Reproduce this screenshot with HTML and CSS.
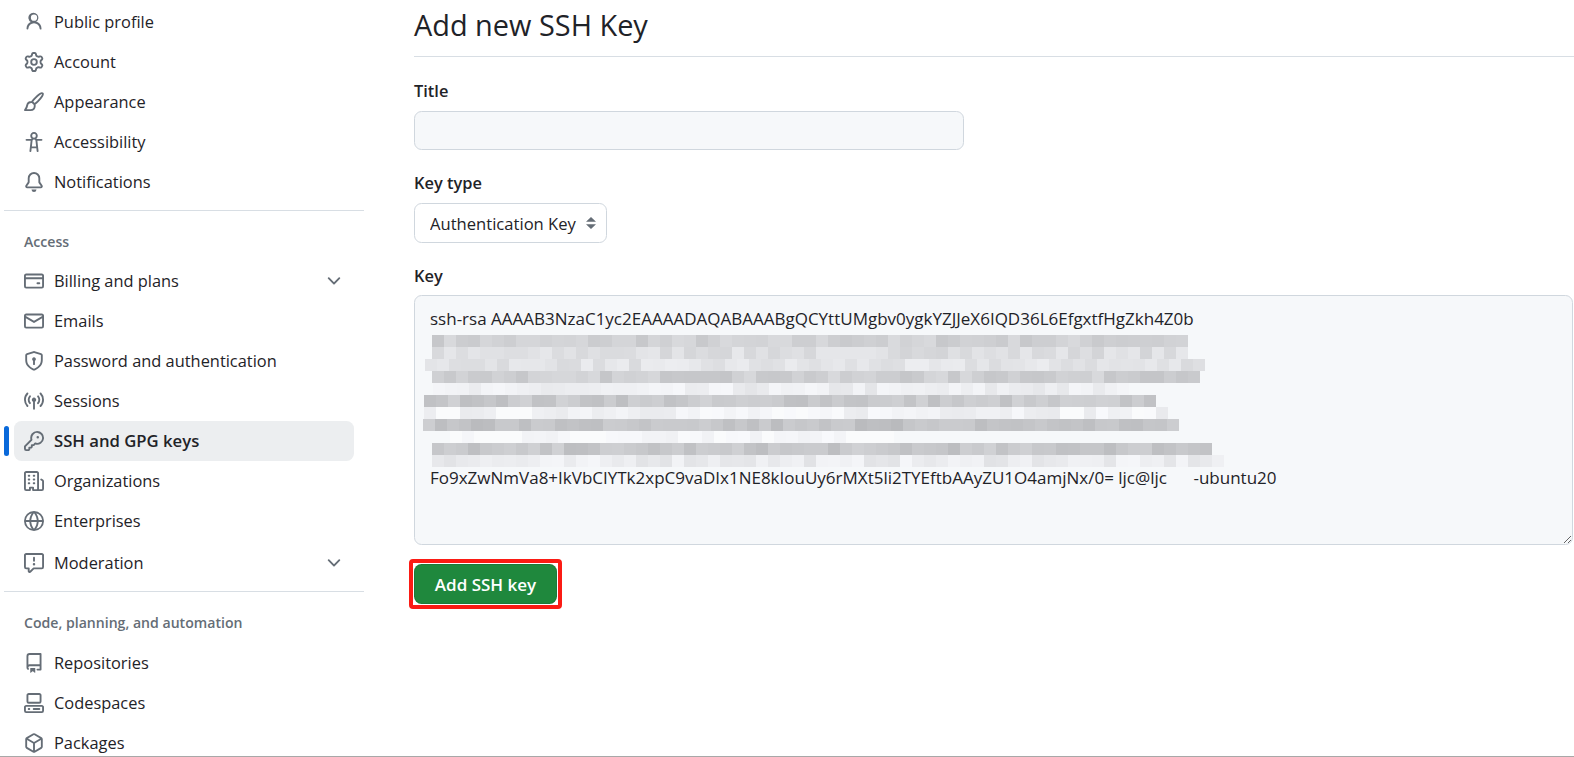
FILE: index.html
```html
<!DOCTYPE html>
<html lang="en">
<head>
    <meta charset="UTF-8">
    <title>Add new SSH Key</title>
    <link rel="stylesheet" href="styles.css">
</head>
<body>
    <div class="page">
        <aside class="side">
            <ul class="menu">
                <li class="item"><svg class="icon" viewBox="0 0 16 16"><path d="M10.561 8.073a6.005 6.005 0 0 1 3.432 5.142.75.75 0 1 1-1.498.07 4.5 4.5 0 0 0-8.99 0 .75.75 0 0 1-1.498-.07 6.004 6.004 0 0 1 3.431-5.142 3.999 3.999 0 1 1 4.123 0ZM10.5 4.5a2.5 2.5 0 1 0-5 0 2.5 2.5 0 0 0 5 0Z"/></svg>Public profile</li>
                <li class="item"><svg class="icon" viewBox="0 0 16 16"><path d="M8 0a8.2 8.2 0 0 1 .701.031C9.444.095 9.99.645 10.16 1.29l.288 1.107c.018.066.079.158.212.224.231.114.454.243.668.386.123.082.233.09.299.071l1.103-.303c.644-.176 1.392.021 1.82.63.27.385.506.792.704 1.218.315.675.111 1.422-.364 1.891l-.814.806c-.049.048-.098.147-.088.294.016.257.016.515 0 .772-.01.147.038.246.088.294l.814.806c.475.469.679 1.216.364 1.891a7.977 7.977 0 0 1-.704 1.217c-.428.61-1.176.807-1.82.63l-1.102-.302c-.067-.019-.177-.011-.3.071a5.909 5.909 0 0 1-.668.386c-.133.066-.194.158-.211.224l-.29 1.106c-.168.646-.715 1.196-1.458 1.26a8.006 8.006 0 0 1-1.402 0c-.743-.064-1.289-.614-1.458-1.26l-.289-1.106c-.018-.066-.079-.158-.212-.224a5.738 5.738 0 0 1-.668-.386c-.123-.082-.233-.09-.299-.071l-1.103.303c-.644.176-1.392-.021-1.82-.63a8.12 8.12 0 0 1-.704-1.218c-.315-.675-.111-1.422.363-1.891l.815-.806c.05-.048.098-.147.088-.294a6.214 6.214 0 0 1 0-.772c.01-.147-.038-.246-.088-.294l-.815-.806C.635 6.045.431 5.298.746 4.623a7.92 7.92 0 0 1 .704-1.217c.428-.61 1.176-.807 1.82-.63l1.102.302c.067.019.177.011.3-.071.214-.143.437-.272.668-.386.133-.066.194-.158.211-.224l.29-1.106C6.009.645 6.556.095 7.299.03 7.53.01 7.764 0 8 0Zm-.571 1.525c-.036.003-.108.036-.137.146l-.289 1.105c-.147.561-.549.967-.998 1.189-.173.086-.34.183-.5.29-.417.278-.97.423-1.529.27l-1.103-.303c-.109-.03-.175.016-.195.045-.22.312-.412.644-.573.99-.014.031-.021.11.059.19l.815.806c.411.406.562.957.53 1.456a4.709 4.709 0 0 0 0 .582c.032.499-.119 1.05-.53 1.456l-.815.806c-.081.08-.073.159-.059.19.162.346.353.677.573.989.02.03.085.076.195.046l1.102-.303c.56-.153 1.113-.008 1.53.27.161.107.328.204.501.29.447.222.85.629.997 1.189l.289 1.105c.029.109.101.143.137.146a6.6 6.6 0 0 0 1.142 0c.036-.003.108-.036.137-.146l.289-1.105c.147-.561.549-.967.998-1.189.173-.086.34-.183.5-.29.417-.278.97-.423 1.529-.27l1.103.303c.109.029.175-.016.195-.045.22-.313.411-.644.573-.99.014-.031.021-.11-.059-.19l-.815-.806c-.411-.406-.562-.957-.53-1.456a4.709 4.709 0 0 0 0-.582c-.032-.499.119-1.05.53-1.456l.815-.806c.081-.08.073-.159.059-.19a6.464 6.464 0 0 0-.573-.989c-.02-.03-.085-.076-.195-.046l-1.102.303c-.56.153-1.113.008-1.53-.27a4.44 4.44 0 0 0-.501-.29c-.447-.222-.85-.629-.997-1.189l-.289-1.105c-.029-.11-.101-.143-.137-.146a6.6 6.6 0 0 0-1.142 0ZM11 8a3 3 0 1 1-6 0 3 3 0 0 1 6 0ZM9.5 8a1.5 1.5 0 1 0-3.001.001A1.5 1.5 0 0 0 9.5 8Z"/></svg>Account</li>
                <li class="item"><svg class="icon line" viewBox="0 0 16 16"><path d="M14.9 1.1c-.8-.8-3.2.9-6.2 4-.9.9-1.7 1.9-2.3 2.7l2 2c.8-.6 1.8-1.4 2.7-2.3 3.1-3 4.6-5.6 3.8-6.4ZM6 8C4 8 2.8 9 2.5 10.8c-.2 1.4-.8 2.6-1.7 3.7h4.4c2 0 3.3-1.2 3.4-3.3 0-.3 0-.7-.1-1"/></svg>Appearance</li>
                <li class="item"><svg class="icon" viewBox="0 0 16 16"><path d="M9.923 5.302c.063.063.122.129.178.198H14A.75.75 0 0 1 14 7h-3.3l.578 5.163.362 2.997a.75.75 0 0 1-1.49.18L9.868 13H6.132l-.282 2.34a.75.75 0 0 1-1.49-.18l.362-2.997L5.3 7H2a.75.75 0 0 1 0-1.5h3.9a2.54 2.54 0 0 1 .176-.198 3 3 0 1 1 3.847 0ZM9.2 7.073h-.001a1.205 1.205 0 0 0-2.398 0L6.305 11.5h3.39ZM9.5 3a1.5 1.5 0 1 0-3.001.001A1.5 1.5 0 0 0 9.5 3Z"/></svg>Accessibility</li>
                <li class="item"><svg class="icon" viewBox="0 0 16 16"><path d="M8 16a2 2 0 0 0 1.985-1.75c.017-.137-.097-.25-.235-.25h-3.5c-.138 0-.252.113-.235.25A2 2 0 0 0 8 16ZM3 5a5 5 0 0 1 10 0v2.947c0 .05.015.098.042.139l1.703 2.555A1.519 1.519 0 0 1 13.482 13H2.518a1.516 1.516 0 0 1-1.263-2.36l1.703-2.554A.255.255 0 0 0 3 7.947Zm5-3.5A3.5 3.5 0 0 0 4.5 5v2.947c0 .346-.102.683-.294.97l-1.703 2.556a.017.017 0 0 0-.003.01l.001.006c0 .002.002.004.004.006l.006.004.007.001h10.964l.007-.001.006-.004.004-.006.001-.007a.017.017 0 0 0-.003-.01l-1.703-2.554a1.745 1.745 0 0 1-.294-.97V5A3.5 3.5 0 0 0 8 1.5Z"/></svg>Notifications</li>
            </ul>
            <div class="rule rule-access"></div>
            <h2 class="group group-access">Access</h2>
            <ul class="menu">
                <li class="item"><svg class="icon" viewBox="0 0 16 16"><path d="M10.75 9a.75.75 0 0 0 0 1.5h1.5a.75.75 0 0 0 0-1.5h-1.5Z"/><path d="M0 3.75C0 2.784.784 2 1.75 2h12.5c.966 0 1.75.784 1.75 1.75v8.5A1.75 1.75 0 0 1 14.25 14H1.75A1.75 1.75 0 0 1 0 12.25ZM14.5 6.5h-13v5.75c0 .138.112.25.25.25h12.5a.25.25 0 0 0 .25-.25Zm0-2.75a.25.25 0 0 0-.25-.25H1.75a.25.25 0 0 0-.25.25V5h13Z"/></svg>Billing and plans<svg class="icon chevron" viewBox="0 0 16 16"><path d="M12.78 5.22a.749.749 0 0 1 0 1.06l-4.25 4.25a.749.749 0 0 1-1.06 0L3.22 6.28a.749.749 0 1 1 1.06-1.06L8 8.939l3.72-3.719a.749.749 0 0 1 1.06 0Z"/></svg></li>
                <li class="item"><svg class="icon" viewBox="0 0 16 16"><path d="M1.75 2h12.5c.966 0 1.75.784 1.75 1.75v8.5A1.75 1.75 0 0 1 14.25 14H1.75A1.75 1.75 0 0 1 0 12.25v-8.5C0 2.784.784 2 1.75 2ZM1.5 12.251c0 .138.112.25.25.25h12.5a.25.25 0 0 0 .25-.25V5.809L8.38 9.397a.75.75 0 0 1-.76 0L1.5 5.809v6.442Zm13-8.181v-.32a.25.25 0 0 0-.25-.25H1.75a.25.25 0 0 0-.25.25v.32L8 7.88Z"/></svg>Emails</li>
                <li class="item"><svg class="icon" viewBox="0 0 16 16"><path d="M7.467.133a1.748 1.748 0 0 1 1.066 0l5.25 1.68A1.75 1.75 0 0 1 15 3.48V7c0 1.566-.32 3.182-1.303 4.682-.983 1.498-2.585 2.813-5.032 3.855a1.697 1.697 0 0 1-1.33 0c-2.447-1.042-4.049-2.357-5.032-3.855C1.32 10.182 1 8.566 1 7V3.48a1.75 1.75 0 0 1 1.217-1.667Zm.61 1.429a.25.25 0 0 0-.153 0l-5.25 1.68a.25.25 0 0 0-.174.238V7c0 1.358.275 2.666 1.057 3.86.784 1.194 2.121 2.34 4.366 3.297a.196.196 0 0 0 .154 0c2.245-.956 3.582-2.104 4.366-3.298C13.225 9.666 13.5 8.36 13.5 7V3.48a.251.251 0 0 0-.174-.237l-5.25-1.68Z"/><path d="M9.5 6.5a1.5 1.5 0 0 1-.75 1.3V10.5a.75.75 0 0 1-1.5 0V7.8a1.5 1.5 0 1 1 2.25-1.3Z"/></svg>Password and authentication</li>
                <li class="item"><svg class="icon" viewBox="0 0 16 16"><path d="M8.75 8.582v5.668a.75.75 0 0 1-1.5 0V8.582a1.75 1.75 0 1 1 1.5 0Zm3.983-7.125a.75.75 0 0 1 1.06.026A7.976 7.976 0 0 1 16 7c0 2.139-.84 4.083-2.207 5.517a.75.75 0 1 1-1.086-1.034A6.474 6.474 0 0 0 14.5 7a6.474 6.474 0 0 0-1.793-4.483.75.75 0 0 1 .026-1.06Zm-9.466 0c.3.286.312.76.026 1.06A6.474 6.474 0 0 0 1.5 7a6.47 6.47 0 0 0 1.793 4.483.75.75 0 0 1-1.086 1.034A7.973 7.973 0 0 1 0 7c0-2.139.84-4.083 2.207-5.517a.75.75 0 0 1 1.06-.026Zm8.556 2.321A4.988 4.988 0 0 1 13 7a4.988 4.988 0 0 1-1.177 3.222.75.75 0 1 1-1.146-.967A3.487 3.487 0 0 0 11.5 7c0-.86-.309-1.645-.823-2.255a.75.75 0 0 1 1.146-.967Zm-6.492.958A3.48 3.48 0 0 0 4.5 7a3.48 3.48 0 0 0 .823 2.255.75.75 0 0 1-1.146.967A4.981 4.981 0 0 1 3 7a4.982 4.982 0 0 1 1.188-3.236.75.75 0 1 1 1.143.972Z"/></svg>Sessions</li>
                <li class="item active"><svg class="icon" viewBox="0 0 16 16"><path d="M10.5 0a5.499 5.499 0 1 1-1.288 10.848l-.932.932a.749.749 0 0 1-.53.22H7v.75a.749.749 0 0 1-.22.53l-.5.5a.749.749 0 0 1-.53.22H5v.75a.749.749 0 0 1-.22.53l-.5.5a.749.749 0 0 1-.53.22h-2A1.75 1.75 0 0 1 0 14.25v-2c0-.199.079-.389.22-.53l4.932-4.932A5.5 5.5 0 0 1 10.5 0Zm-4 5.5c-.001.431.069.86.205 1.269a.75.75 0 0 1-.181.768L1.5 12.56v1.69c0 .138.112.25.25.25h1.69l.06-.06v-1.19a.75.75 0 0 1 .75-.75h1.19l.06-.06v-1.19a.75.75 0 0 1 .75-.75h1.19l1.023-1.025a.75.75 0 0 1 .768-.18A4 4 0 1 0 6.5 5.5ZM11 6a1 1 0 1 1 0-2 1 1 0 0 1 0 2Z"/></svg>SSH and GPG keys</li>
                <li class="item"><svg class="icon" viewBox="0 0 16 16"><path d="M1.75 16A1.75 1.75 0 0 1 0 14.25V1.75C0 .784.784 0 1.75 0h8.5C11.216 0 12 .784 12 1.75v12.5c0 .085-.006.168-.018.25h2.268a.25.25 0 0 0 .25-.25V8.285a.25.25 0 0 0-.111-.208l-1.055-.703a.749.749 0 1 1 .832-1.248l1.055.703c.487.325.779.871.779 1.456v5.965A1.75 1.75 0 0 1 14.25 16h-3.5a.766.766 0 0 1-.197-.026c-.099.017-.2.026-.303.026h-3a.75.75 0 0 1-.75-.75V14h-1v1.25a.75.75 0 0 1-.75.75Zm-.25-1.75c0 .138.112.25.25.25H4v-1.25a.75.75 0 0 1 .75-.75h2.5a.75.75 0 0 1 .75.75v1.25h2.25a.25.25 0 0 0 .25-.25V1.75a.25.25 0 0 0-.25-.25h-8.5a.25.25 0 0 0-.25.25ZM3.75 6h.5a.75.75 0 0 1 0 1.5h-.5a.75.75 0 0 1 0-1.5ZM3 3.75A.75.75 0 0 1 3.75 3h.5a.75.75 0 0 1 0 1.5h-.5A.75.75 0 0 1 3 3.75Zm4 3A.75.75 0 0 1 7.75 6h.5a.75.75 0 0 1 0 1.5h-.5A.75.75 0 0 1 7 6.75ZM7.75 3h.5a.75.75 0 0 1 0 1.5h-.5a.75.75 0 0 1 0-1.5ZM3 9.75A.75.75 0 0 1 3.75 9h.5a.75.75 0 0 1 0 1.5h-.5A.75.75 0 0 1 3 9.75ZM7.75 9h.5a.75.75 0 0 1 0 1.5h-.5a.75.75 0 0 1 0-1.5Z"/></svg>Organizations</li>
                <li class="item"><svg class="icon" viewBox="0 0 16 16"><path d="M8 0a8 8 0 1 1 0 16A8 8 0 0 1 8 0ZM5.78 8.75a9.64 9.64 0 0 0 1.363 4.177c.255.426.542.832.857 1.215.245-.296.551-.705.857-1.215A9.64 9.64 0 0 0 10.22 8.75Zm4.44-1.5a9.64 9.64 0 0 0-1.363-4.177c-.307-.51-.612-.919-.857-1.215a9.927 9.927 0 0 0-.857 1.215A9.64 9.64 0 0 0 5.78 7.25Zm-5.944 1.5H1.543a6.507 6.507 0 0 0 4.666 5.5c-.123-.181-.24-.365-.352-.552-.715-1.192-1.437-2.874-1.581-4.948Zm-2.733-1.5h2.733c.144-2.074.866-3.756 1.58-4.948.12-.197.237-.381.353-.552a6.507 6.507 0 0 0-4.666 5.5Zm10.181 1.5c-.144 2.074-.866 3.756-1.58 4.948-.12.197-.237.381-.353.552a6.507 6.507 0 0 0 4.666-5.5Zm2.733-1.5a6.507 6.507 0 0 0-4.666-5.5c.123.181.24.365.353.552.714 1.192 1.436 2.874 1.58 4.948Z"/></svg>Enterprises</li>
                <li class="item item-mod"><svg class="icon" viewBox="0 0 16 16"><path d="M0 1.75C0 .784.784 0 1.75 0h12.5C15.216 0 16 .784 16 1.75v9.5A1.75 1.75 0 0 1 14.25 13H8.06l-2.573 2.573A1.458 1.458 0 0 1 3 14.543V13H1.75A1.75 1.75 0 0 1 0 11.25Zm1.75-.25a.25.25 0 0 0-.25.25v9.5c0 .138.112.25.25.25h2a.75.75 0 0 1 .75.75v2.19l2.72-2.72a.749.749 0 0 1 .53-.22h6.5a.25.25 0 0 0 .25-.25v-9.5a.25.25 0 0 0-.25-.25Zm7 2.25v2.5a.75.75 0 0 1-1.5 0v-2.5a.75.75 0 0 1 1.5 0ZM9 9a1 1 0 1 1-2 0 1 1 0 0 1 2 0Z"/></svg>Moderation<svg class="icon chevron" viewBox="0 0 16 16"><path d="M12.78 5.22a.749.749 0 0 1 0 1.06l-4.25 4.25a.749.749 0 0 1-1.06 0L3.22 6.28a.749.749 0 1 1 1.06-1.06L8 8.939l3.72-3.719a.749.749 0 0 1 1.06 0Z"/></svg></li>
            </ul>
            <div class="rule rule-code"></div>
            <h2 class="group">Code, planning, and automation</h2>
            <ul class="menu">
                <li class="item"><svg class="icon" viewBox="0 0 16 16"><path d="M2 2.5A2.5 2.5 0 0 1 4.5 0h8.75a.75.75 0 0 1 .75.75v12.5a.75.75 0 0 1-.75.75h-2.5a.75.75 0 0 1 0-1.5h1.75v-2h-8a1 1 0 0 0-.714 1.7.75.75 0 1 1-1.072 1.05A2.495 2.495 0 0 1 2 11.5Zm10.5-1h-8a1 1 0 0 0-1 1v6.708A2.486 2.486 0 0 1 4.5 9h8ZM5 12.25a.25.25 0 0 1 .25-.25h3.5a.25.25 0 0 1 .25.25v3.25a.25.25 0 0 1-.4.2l-1.45-1.087a.249.249 0 0 0-.3 0L5.4 15.7a.25.25 0 0 1-.4-.2Z"/></svg>Repositories</li>
                <li class="item"><svg class="icon" viewBox="0 0 16 16"><path d="M0 11.25c0-.966.784-1.75 1.75-1.75h12.5c.966 0 1.75.784 1.75 1.75v3A1.75 1.75 0 0 1 14.25 16H1.75A1.75 1.75 0 0 1 0 14.25Zm2-9.5C2 .784 2.784 0 3.75 0h8.5C13.216 0 14 .784 14 1.75v5a1.75 1.75 0 0 1-1.75 1.75h-8.5A1.75 1.75 0 0 1 2 6.75Zm1.75-.25a.25.25 0 0 0-.25.25v5c0 .138.112.25.25.25h8.5a.25.25 0 0 0 .25-.25v-5a.25.25 0 0 0-.25-.25Zm-2 9.5a.25.25 0 0 0-.25.25v3c0 .138.112.25.25.25h12.5a.25.25 0 0 0 .25-.25v-3a.25.25 0 0 0-.25-.25Z"/><path d="M7 12.75a.75.75 0 0 1 .75-.75h4.5a.75.75 0 0 1 0 1.5h-4.5a.75.75 0 0 1-.75-.75Zm-4 0a.75.75 0 0 1 .75-.75h.5a.75.75 0 0 1 0 1.5h-.5a.75.75 0 0 1-.75-.75Z"/></svg>Codespaces</li>
                <li class="item"><svg class="icon" viewBox="0 0 16 16"><path d="m8.878.392 5.25 3.045c.54.314.872.89.872 1.514v6.098a1.75 1.75 0 0 1-.872 1.514l-5.25 3.045a1.75 1.75 0 0 1-1.756 0l-5.25-3.045A1.75 1.75 0 0 1 1 11.049V4.951c0-.624.332-1.201.872-1.514L7.122.392a1.75 1.75 0 0 1 1.756 0ZM7.875 1.69l-4.63 2.685L8 7.133l4.755-2.758-4.63-2.685a.248.248 0 0 0-.25 0ZM2.5 5.677v5.372c0 .09.047.171.125.216l4.625 2.683V8.432Zm6.25 8.271 4.625-2.683a.25.25 0 0 0 .125-.216V5.677L8.75 8.432Z"/></svg>Packages</li>
            </ul>
        </aside>
        <main class="main">
            <h1 class="title">Add new SSH Key</h1>
            <form class="form">
                <label class="label" for="key-title">Title</label>
                <input class="input" id="key-title" type="text">
                <label class="label" for="key-type">Key type</label>
                <select class="select" id="key-type"><option>Authentication Key</option></select>
                <label class="label" for="key-body">Key</label>
                <div class="key-field">
                    <textarea class="key" id="key-body" wrap="off" spellcheck="false">ssh-rsa AAAAB3NzaC1yc2EAAAADAQABAAABgQCYttUMgbv0ygkYZJJeX6IQD36L6EfgxtfHgZkh4Z0b







Fo9xZwNmVa8+IkVbCIYTk2xpC9vaDIx1NE8kIouUy6rMXt5li2TYEftbAAyZU1O4amjNx/0= ljc@ljc      -ubuntu20</textarea>
                    <div class="redact" id="redact"></div>
                </div>
                <div class="mark"><button class="btn" type="button">Add SSH key</button></div>
            </form>
        </main>
    </div>
    <script src="redact.js"></script>
</body>
</html>
```
FILE: styles.css
```css
html,body{
    width: 100%;
    height: 100%;
    margin: 0;
    overflow: hidden;
    background-color: #fff;
}
body,input,select,textarea,button{
    font-family: "Open Sans","Liberation Sans",sans-serif;
    color: #1f2328;
}
.page{
    display: flex;
    height: 757px;
    box-sizing: border-box;
    border-bottom: 1px solid #a8a8a8;
    overflow: hidden;
}
.side{
    flex: none;
    width: 360px;
    margin-left: 4px;
    padding-top: 2px;
}
.menu{
    margin: 0;
    padding: 0 10px;
    list-style: none;
}
.item{
    position: relative;
    display: flex;
    align-items: center;
    gap: 10px;
    box-sizing: border-box;
    height: 40px;
    padding: 0 10px 2px;
    font-size: 16.4px;
    border-radius: 7.5px;
}
.item-mod{
    margin-top: 2px;
}
.active{
    font-size: 16.7px;
    font-weight: 600;
    background-color: #eceef0;
}
.active::before{
    content: "";
    position: absolute;
    top: 5px;
    left: -10px;
    width: 5px;
    height: 30px;
    border-radius: 3px;
    background-color: #0969da;
}
.icon{
    flex: none;
    width: 20px;
    height: 20px;
    margin-top: 2px;
    fill: #656d76;
}
.line{
    fill: none;
    stroke: #656d76;
    stroke-width: 1.5;
    stroke-linejoin: round;
    stroke-linecap: round;
}
.chevron{
    margin-left: auto;
}
.rule{
    height: 1px;
    background-color: #d8dee4;
}
.rule-access{
    margin-top: 8px;
}
.rule-code{
    margin-top: 8px;
}
.group{
    margin: 0;
    padding: 20px 20px 10px;
    font-size: 14.1px;
    line-height: 21px;
    font-weight: 600;
    color: #656d76;
}
.group-access{
    padding-bottom: 9px;
}
.main{
    flex: 1;
    min-width: 0;
    margin-left: 50px;
}
.title{
    margin: 0;
    height: 57px;
    box-sizing: border-box;
    font-size: 28.9px;
    line-height: 50px;
    font-weight: 400;
    border-bottom: 1px solid #d8dee4;
}
.form{
    display: flex;
    flex-direction: column;
    align-items: flex-start;
    margin-right: 1px;
}
.label{
    display: block;
    height: 25px;
    font-size: 16.4px;
    line-height: 25px;
    font-weight: 600;
}
.label:first-child{
    margin-top: 21px;
}
.input,.select,.key{
    box-sizing: border-box;
    border: 1px solid #d0d7de;
    border-radius: 7.5px;
    outline: none;
}
.input{
    width: 550px;
    height: 39px;
    margin: 8px 0 20px;
    background-color: #f6f8fa;
}
.select{
    width: 193px;
    height: 40px;
    margin: 8px 0 20px;
    padding: 0 0 0 15px;
    font-size: 16.6px;
    appearance: none;
    background: #fff url("data:image/svg+xml,%3Csvg xmlns='http://www.w3.org/2000/svg' width='20' height='20' viewBox='0 0 16 16'%3E%3Cpath fill='%23656d76' d='M4 7 8 3.2 12 7ZM4 9l4 3.8L12 9Z'/%3E%3C/svg%3E") no-repeat right 5px center;
}
.key-field{
    position: relative;
    width: 100%;
    margin-top: 7px;
}
.key{
    display: block;
    width: 100%;
    height: 250px;
    padding: 13px 15px;
    font-size: 17px;
    line-height: 19.875px;
    background-color: #f6f8fa;
    overflow: hidden;
    resize: vertical;
}
.redact{
    position: absolute;
    top: 40px;
    left: 9px;
}
.redact-row{
    display: flex;
    height: 12px;
}
.redact-cell{
    flex: none;
    width: 12px;
    height: 12px;
}
.mark{
    margin: 14px 0 0 -5px;
    padding: 1px;
    border: 4px solid #fb1b14;
    border-radius: 4px;
}
.btn{
    display: block;
    width: 143px;
    height: 40px;
    padding: 0;
    font-size: 17px;
    font-weight: 600;
    color: #fff;
    border: 1px solid rgba(31,35,40,.15);
    border-radius: 7.5px;
    background-color: #1f883d;
}
```
FILE: redact.js
```js
(function(){
    "use strict";

    // pixelated block over the key: [left offset, cells, base grey]
    var rows = [
        [9,63,208],[9,63,221],[2,65,226],[9,64,206],[10,58,236],
        [1,61,200],[1,62,243],[0,63,195],[27,37,249],[9,65,198],[9,66,235]
    ];
    var oBox = document.getElementById("redact");
    var seed = 7;

    function next(){
        seed = (seed * 16807) % 2147483647;
        return seed / 2147483647;
    }

    rows.forEach(function(r){
        var oRow = document.createElement("div");
        oRow.className = "redact-row";
        oRow.style.marginLeft = r[0] + "px";
        for(var i = 0; i < r[1]; i++){
            var g = Math.round(r[2] + (next() - 0.5) * 20);
            if(g > 250) g = 250;
            var oCell = document.createElement("div");
            oCell.className = "redact-cell";
            oCell.style.backgroundColor = "rgb(" + g + "," + (g + 1) + "," + (g + 4 > 252 ? 252 : g + 4) + ")";
            oRow.appendChild(oCell);
        }
        oBox.appendChild(oRow);
    });
}());
```
